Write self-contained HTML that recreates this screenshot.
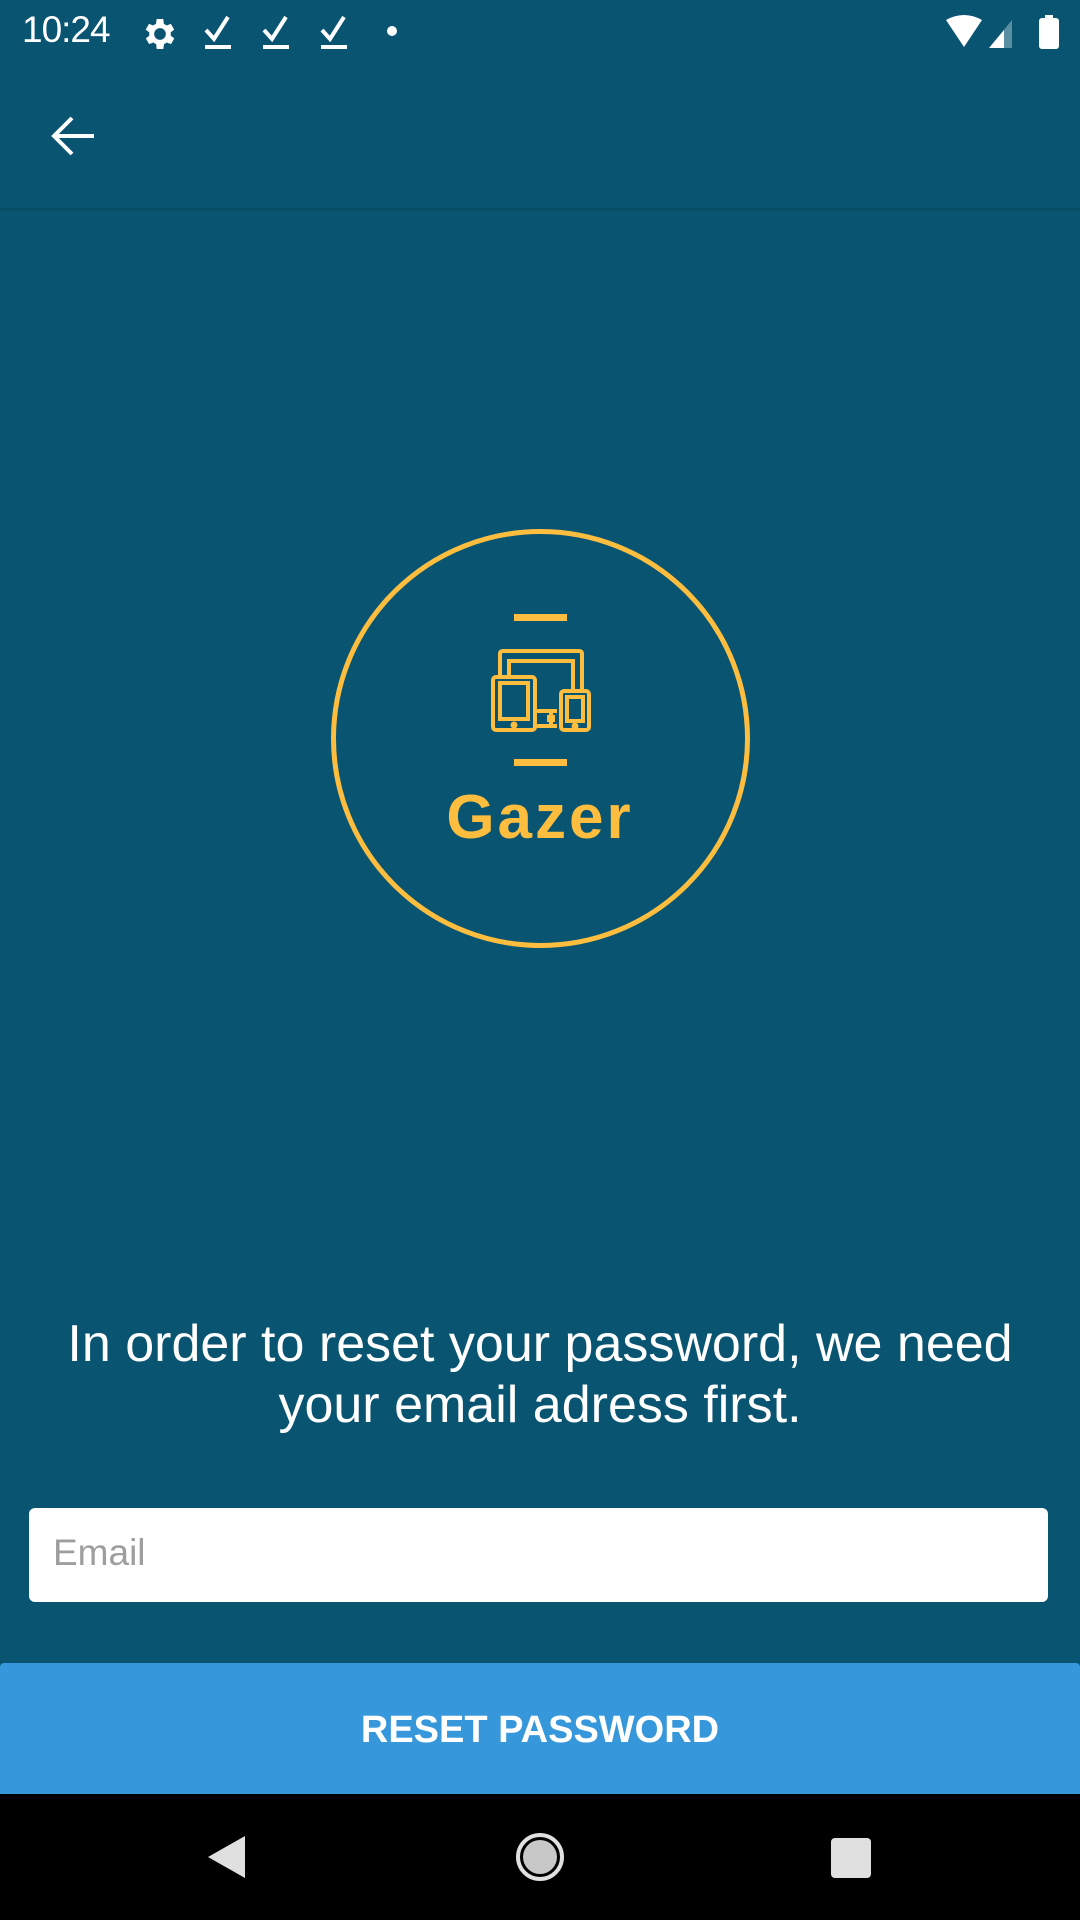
<!DOCTYPE html>
<html><head><meta charset="utf-8"><style>
html,body{margin:0;padding:0}
body{width:1080px;height:1920px;background:#085471;position:relative;overflow:hidden;font-family:"Liberation Sans",sans-serif;color:#fff}
.abs{position:absolute}
</style></head><body>
<!-- status bar -->
<div class="abs" style="left:22px;top:9px;font-size:37px;letter-spacing:-1px">10:24</div>
<svg class="abs" style="left:140px;top:14px" width="40" height="40" viewBox="0 0 24 24"><path fill="#fff" d="M19.4 13a7.5 7.5 0 0 0 0-2l2.1-1.6-2-3.5-2.5 1a7 7 0 0 0-1.7-1L15 3h-4l-.4 2.9a7 7 0 0 0-1.7 1l-2.5-1-2 3.5L6.6 11a7.5 7.5 0 0 0 0 2l-2.1 1.6 2 3.5 2.5-1a7 7 0 0 0 1.7 1L11 21h4l.4-2.9a7 7 0 0 0 1.7-1l2.5 1 2-3.5zM13 15.5a3.5 3.5 0 1 1 0-7 3.5 3.5 0 0 1 0 7z" transform="translate(-1 0)"/></svg>
<svg class="abs" style="left:203px;top:14px" width="30" height="36" viewBox="0 0 30 36"><path d="M3 16l8 9 14-22" fill="none" stroke="#fff" stroke-width="4"/><rect x="2" y="31" width="26" height="4" fill="#fff"/></svg>
<svg class="abs" style="left:261px;top:14px" width="30" height="36" viewBox="0 0 30 36"><path d="M3 16l8 9 14-22" fill="none" stroke="#fff" stroke-width="4"/><rect x="2" y="31" width="26" height="4" fill="#fff"/></svg>
<svg class="abs" style="left:319px;top:14px" width="30" height="36" viewBox="0 0 30 36"><path d="M3 16l8 9 14-22" fill="none" stroke="#fff" stroke-width="4"/><rect x="2" y="31" width="26" height="4" fill="#fff"/></svg>
<div class="abs" style="left:387px;top:26px;width:10px;height:10px;border-radius:50%;background:#fff"></div>
<svg class="abs" style="left:944px;top:14px" width="120" height="36" viewBox="0 0 120 36"><path d="M2 6Q20 -4 38 6L20 33Z" fill="#fff"/><path d="M45 34L68 6V34Z" fill="#5a8fa3"/><path d="M45 34L60 16V34Z" fill="#fff"/><rect x="95" y="4" width="20" height="31" rx="3" fill="#fff"/><rect x="101" y="1" width="8" height="5" fill="#fff"/></svg>
<!-- app bar -->
<svg class="abs" style="left:48px;top:112px" width="50" height="50" viewBox="0 0 50 50"><path d="M46 24H8M24 6L6 24l18 18" fill="none" stroke="#fff" stroke-width="4"/></svg>
<div class="abs" style="left:0;top:208px;width:1080px;height:3px;background:#074d67"></div>
<!-- logo -->
<div class="abs" style="left:331px;top:529px;width:409px;height:409px;border:5px solid #fdbd3f;border-radius:50%"></div>
<div class="abs" style="left:514px;top:614px;width:53px;height:7px;background:#fdbd3f"></div>
<div class="abs" style="left:514px;top:759px;width:53px;height:7px;background:#fdbd3f"></div>
<svg class="abs" style="left:490px;top:648px" width="102" height="86" viewBox="0 0 102 86" fill="none" stroke="#fdbd3f" stroke-width="4">
<path d="M10 29V6q0-3 3-3h76q3 0 3 3v37"/><path d="M19 29V13h64v30"/>
<rect x="3" y="29" width="42" height="53" rx="3"/><rect x="10" y="35" width="28" height="36"/><circle cx="24" cy="77" r="1.5" fill="#fdbd3f"/>
<rect x="71" y="43" width="28" height="39" rx="3"/><rect x="77" y="49" width="16" height="24"/><circle cx="85" cy="78" r="1.5" fill="#fdbd3f"/>
<path d="M47 63h20M47 78h20M61 63v15M57 69h6v3h-6"/></svg>
<div class="abs" style="left:0;top:782px;width:1080px;text-align:center;font-size:62px;font-weight:bold;color:#fdbd3f;letter-spacing:3px">Gazer</div>
<!-- text -->
<div class="abs" style="left:0;top:1314px;width:1080px;text-align:center;font-size:52px;line-height:61px">In order to reset your password, we need<br>your email adress first.</div>
<!-- input -->
<div class="abs" style="left:29px;top:1508px;width:1019px;height:94px;background:#fff;border-radius:6px"></div>
<div class="abs" style="left:53px;top:1532px;font-size:37px;color:#9e9e9e">Email</div>
<!-- button -->
<div class="abs" style="left:0;top:1663px;width:1080px;height:131px;background:#3797db;border-radius:4px 4px 0 0"></div>
<div class="abs" style="left:0;top:1709px;width:1080px;text-align:center;font-size:38px;font-weight:bold">RESET PASSWORD</div>
<!-- nav -->
<div class="abs" style="left:0;top:1794px;width:1080px;height:126px;background:#000"></div>
<svg class="abs" style="left:205px;top:1834px" width="44" height="46" viewBox="0 0 44 46"><path d="M40 2V44L3 23Z" fill="#e0e0e0"/></svg>
<div class="abs" style="left:516px;top:1833px;width:40px;height:40px;border:4px solid #e0e0e0;border-radius:50%;box-sizing:content-box"></div>
<div class="abs" style="left:523px;top:1840px;width:34px;height:34px;background:#c8c8c8;border-radius:50%"></div>
<div class="abs" style="left:831px;top:1838px;width:40px;height:40px;background:#e0e0e0;border-radius:4px"></div>
</body></html>
